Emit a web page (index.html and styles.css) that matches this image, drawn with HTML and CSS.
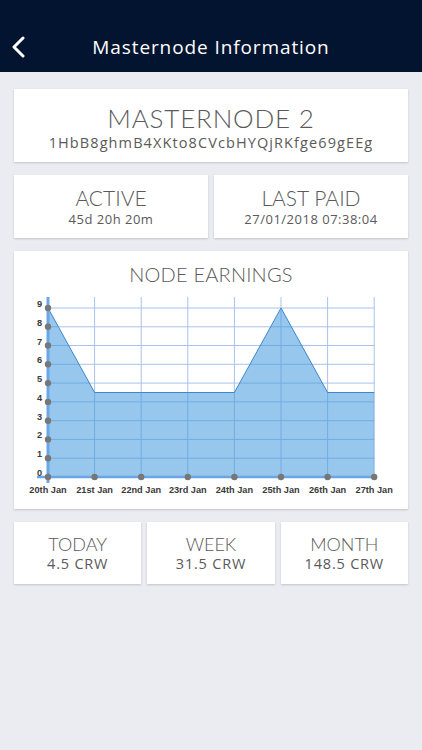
FILE: index.html
```html
<!doctype html>
<html>
<head>
  <meta content="text/html;charset=utf-8" http-equiv="Content-Type">
  <title>Masternode Information</title>
  <link rel="stylesheet" href="styles.css">
</head>
<body>
  <div class="topbar">
    <svg class="back" width="16" height="22" viewBox="0 0 16 22">
      <path d="M13 2 L4 11 L13 20" fill="none" stroke="#fff" stroke-width="3" stroke-linecap="round" stroke-linejoin="round"/>
    </svg>
    <span class="topbar-title">Masternode Information</span>
  </div>

  <div class="content">
    <div class="card node">
      <div class="node-name">MASTERNODE 2</div>
      <div class="node-addr">1HbB8ghmB4XKto8CVcbHYQjRKfge69gEEg</div>
    </div>

    <div class="row">
      <div class="card stat">
        <div class="stat-title">ACTIVE</div>
        <div class="stat-value">45d 20h 20m</div>
      </div>
      <div class="card stat">
        <div class="stat-title">LAST PAID</div>
        <div class="stat-value">27/01/2018 07:38:04</div>
      </div>
    </div>

    <div class="card chart">
      <div class="chart-title">NODE EARNINGS</div>
      <svg class="chart-svg" width="393" height="218" viewBox="0 0 393 218">
        <!-- horizontal grid -->
        <g stroke="#a8c3ea" stroke-width="1">
          <line x1="34" y1="172.2" x2="360.2" y2="172.2"/>
          <line x1="34" y1="153.4" x2="360.2" y2="153.4"/>
          <line x1="34" y1="134.7" x2="360.2" y2="134.7"/>
          <line x1="34" y1="115.9" x2="360.2" y2="115.9"/>
          <line x1="34" y1="97.1" x2="360.2" y2="97.1"/>
          <line x1="34" y1="78.3" x2="360.2" y2="78.3"/>
          <line x1="34" y1="59.5" x2="360.2" y2="59.5"/>
          <line x1="34" y1="40.8" x2="360.2" y2="40.8"/>
          <line x1="34" y1="22" x2="360.2" y2="22"/>
        </g>
        <!-- vertical grid -->
        <g stroke="#a8c3ea" stroke-width="1">
          <line x1="80.6" y1="11" x2="80.6" y2="191"/>
          <line x1="127.2" y1="11" x2="127.2" y2="191"/>
          <line x1="173.8" y1="11" x2="173.8" y2="191"/>
          <line x1="220.4" y1="11" x2="220.4" y2="191"/>
          <line x1="267" y1="11" x2="267" y2="191"/>
          <line x1="313.6" y1="11" x2="313.6" y2="191"/>
          <line x1="360.2" y1="11" x2="360.2" y2="191"/>
        </g>
        <!-- area -->
        <path d="M34 191 L34 22 L80.6 106.5 L127.2 106.5 L173.8 106.5 L220.4 106.5 L267 22 L313.6 106.5 L360.2 106.5 L360.2 191 Z"
              fill="rgba(66,153,222,0.55)"/>
        <path d="M34 22 L80.6 106.5 L127.2 106.5 L173.8 106.5 L220.4 106.5 L267 22 L313.6 106.5 L360.2 106.5"
              fill="none" stroke="#3d87cc" stroke-width="1"/>
        <!-- axes -->
        <line x1="34" y1="11" x2="34" y2="197" stroke="#6aa5e6" stroke-width="3"/>
        <line x1="23" y1="191" x2="360.2" y2="191" stroke="#6aa5e6" stroke-width="2.5"/>
        <!-- dots -->
        <g fill="#777">
          <circle cx="34" cy="191" r="3.2"/>
          <circle cx="34" cy="172.2" r="3.2"/>
          <circle cx="34" cy="153.4" r="3.2"/>
          <circle cx="34" cy="134.7" r="3.2"/>
          <circle cx="34" cy="115.9" r="3.2"/>
          <circle cx="34" cy="97.1" r="3.2"/>
          <circle cx="34" cy="78.3" r="3.2"/>
          <circle cx="34" cy="59.5" r="3.2"/>
          <circle cx="34" cy="40.8" r="3.2"/>
          <circle cx="34" cy="22" r="3.2"/>
          <circle cx="80.6" cy="191" r="3.2"/>
          <circle cx="127.2" cy="191" r="3.2"/>
          <circle cx="173.8" cy="191" r="3.2"/>
          <circle cx="220.4" cy="191" r="3.2"/>
          <circle cx="267" cy="191" r="3.2"/>
          <circle cx="313.6" cy="191" r="3.2"/>
          <circle cx="360.2" cy="191" r="3.2"/>
        </g>
        <!-- y labels -->
        <g class="axis-label" text-anchor="end">
          <text x="28" y="190">0</text>
          <text x="28" y="171.2">1</text>
          <text x="28" y="152.4">2</text>
          <text x="28" y="133.7">3</text>
          <text x="28" y="114.9">4</text>
          <text x="28" y="96.1">5</text>
          <text x="28" y="77.3">6</text>
          <text x="28" y="58.5">7</text>
          <text x="28" y="39.8">8</text>
          <text x="28" y="21">9</text>
        </g>
        <!-- x labels -->
        <g class="axis-label" text-anchor="middle">
          <text x="34" y="206.5">20th Jan</text>
          <text x="80.6" y="206.5">21st Jan</text>
          <text x="127.2" y="206.5">22nd Jan</text>
          <text x="173.8" y="206.5">23rd Jan</text>
          <text x="220.4" y="206.5">24th Jan</text>
          <text x="267" y="206.5">25th Jan</text>
          <text x="313.6" y="206.5">26th Jan</text>
          <text x="360.2" y="206.5">27th Jan</text>
        </g>
      </svg>
    </div>

    <div class="row">
      <div class="card total">
        <div class="total-title">TODAY</div>
        <div class="total-value">4.5 CRW</div>
      </div>
      <div class="card total">
        <div class="total-title">WEEK</div>
        <div class="total-value">31.5 CRW</div>
      </div>
      <div class="card total">
        <div class="total-title">MONTH</div>
        <div class="total-value">148.5 CRW</div>
      </div>
    </div>
  </div>
</body>
</html>
```

FILE: styles.css
```css
* {
  box-sizing: border-box;
}
body {
  margin: 0;
  background-color: #ebebf2;
  color: #5a5a5a;
  font-family: "Open Sans", "Noto Sans", sans-serif;
  min-height: 750px;
}
.topbar {
  height: 72px;
  background-color: #031430;
  color: #fff;
  display: flex;
  align-items: center;
  justify-content: center;
  padding-top: 22px;
  position: relative;
}
.back {
  position: absolute;
  left: 10px;
  top: 36px;
}
.topbar-title {
  font-size: 19px;
  letter-spacing: 0.9px;
}
.content {
  padding: 17px 14px;
  display: flex;
  flex-direction: column;
  gap: 13px;
}
.card {
  background-color: #fff;
  box-shadow: 0 1px 2px rgba(0,0,0,0.18);
  text-align: center;
}
.row {
  display: flex;
  gap: 6px;
}
.row .card {
  flex: 1;
}
.node {
  padding: 14px 0 9px;
}
.node-name {
  font-family: Lato, sans-serif;
  font-weight: 300;
  font-size: 26px;
  line-height: 30px;
  letter-spacing: 0.8px;
}
.node-addr {
  font-size: 14.5px;
  line-height: 20px;
  letter-spacing: 1.1px;
}
.stat {
  padding: 11px 0 10px;
}
.stat-title {
  font-family: Lato, sans-serif;
  font-weight: 300;
  font-size: 21px;
  line-height: 24px;
}
.stat-value {
  font-size: 13px;
  line-height: 18px;
  letter-spacing: 0.5px;
}
.chart {
  padding: 11px 0 5px;
}
.chart-title {
  font-family: Lato, sans-serif;
  font-weight: 300;
  font-size: 20px;
  line-height: 24px;
  letter-spacing: 0.2px;
}
.chart-svg {
  display: block;
}
.axis-label {
  font-family: "Liberation Sans", Arial, sans-serif;
  font-weight: bold;
  font-size: 9.2px;
  fill: #3a3a3a;
}
.total {
  padding: 11px 0;
}
.total-title {
  font-family: Lato, sans-serif;
  font-weight: 300;
  font-size: 18px;
  line-height: 22px;
}
.total-value {
  font-size: 14.5px;
  line-height: 18px;
  letter-spacing: 0.8px;
}
```
